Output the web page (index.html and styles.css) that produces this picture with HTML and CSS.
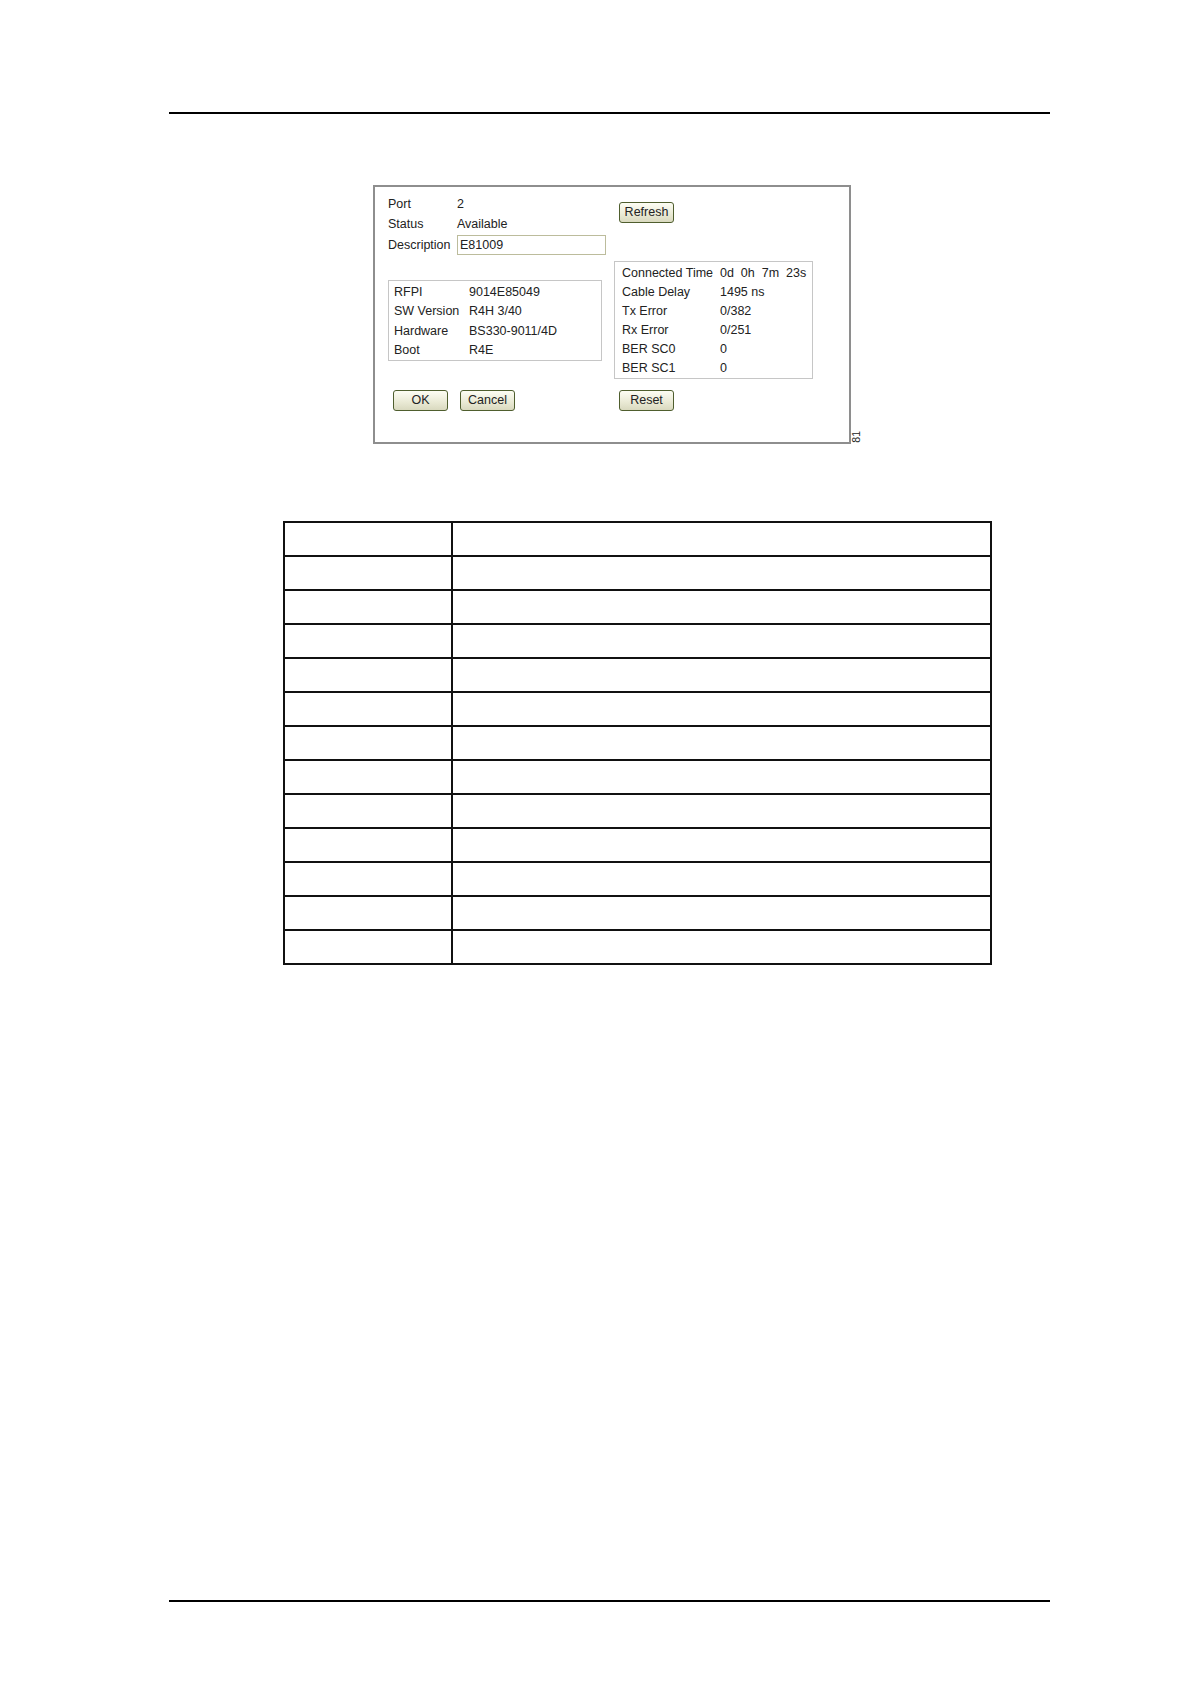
FILE: index.html
```html
<!DOCTYPE html>
<html>
<head>
<meta charset="utf-8">
<link rel="stylesheet" href="styles.css">
</head>
<body>
<div class="page">
  <div class="rule"></div>

  <div class="figure">
    <div class="dialog">
      <div class="col-left">
        <div class="field"><span class="flabel">Port</span><span>2</span></div>
        <div class="field"><span class="flabel">Status</span><span>Available</span></div>
        <div class="field desc"><span class="flabel">Description</span><span class="input">E81009</span></div>
        <div class="infobox left-box">
          <div class="irow"><span class="ilabel">RFPI</span><span>9014E85049</span></div>
          <div class="irow"><span class="ilabel">SW Version</span><span>R4H 3/40</span></div>
          <div class="irow"><span class="ilabel">Hardware</span><span>BS330-9011/4D</span></div>
          <div class="irow"><span class="ilabel">Boot</span><span>R4E</span></div>
        </div>
        <div class="btnrow">
          <span class="btn">OK</span>
          <span class="btn">Cancel</span>
        </div>
      </div>
      <div class="col-right">
        <span class="btn refresh">Refresh</span>
        <div class="infobox right-box">
          <div class="irow"><span class="rlabel">Connected Time</span><span class="pre">0d  0h  7m  23s</span></div>
          <div class="irow"><span class="rlabel">Cable Delay</span><span>1495 ns</span></div>
          <div class="irow"><span class="rlabel">Tx Error</span><span>0/382</span></div>
          <div class="irow"><span class="rlabel">Rx Error</span><span>0/251</span></div>
          <div class="irow"><span class="rlabel">BER SC0</span><span>0</span></div>
          <div class="irow"><span class="rlabel">BER SC1</span><span>0</span></div>
        </div>
        <span class="btn reset">Reset</span>
      </div>
      <span class="fignum">81</span>
    </div>
  </div>

  <table class="grid">
    <tr><td class="c1"></td><td></td></tr>
    <tr><td class="c1"></td><td></td></tr>
    <tr><td class="c1"></td><td></td></tr>
    <tr><td class="c1"></td><td></td></tr>
    <tr><td class="c1"></td><td></td></tr>
    <tr><td class="c1"></td><td></td></tr>
    <tr><td class="c1"></td><td></td></tr>
    <tr><td class="c1"></td><td></td></tr>
    <tr><td class="c1"></td><td></td></tr>
    <tr><td class="c1"></td><td></td></tr>
    <tr><td class="c1"></td><td></td></tr>
    <tr><td class="c1"></td><td></td></tr>
    <tr><td class="c1"></td><td></td></tr>
  </table>

  <div class="rule bottom"></div>
</div>
</body>
</html>
```

FILE: styles.css
```css
html, body {
  margin: 0;
  padding: 0;
  background: #ffffff;
}

body {
  font-family: "Liberation Sans", Arial, sans-serif;
  color: #222222;
}

.page {
  width: 881px;
  margin-left: 169px;
  padding-top: 112px;
}

.rule {
  height: 0;
  border-top: 2px solid #000;
}

.rule.bottom {
  margin-top: 635px;
}

.figure {
  margin-top: 71px;
  padding-left: 204px;
}

.dialog {
  position: relative;
  box-sizing: border-box;
  width: 478px;
  height: 259px;
  border: 2px solid #8e8e8e;
  padding: 8px 0 0 13px;
  display: flex;
  font-size: 12.5px;
}

.col-left {
  width: 226px;
  display: flex;
  flex-direction: column;
}

.field {
  display: flex;
  height: 19.5px;
  line-height: 19.5px;
}

.flabel {
  width: 69px;
}

.field.desc {
  margin-top: 1px;
  height: 20px;
  line-height: 20px;
}

.input {
  box-sizing: border-box;
  width: 149px;
  height: 20px;
  line-height: 18px;
  border: 1px solid #bcbc9c;
  padding-left: 2px;
  background: #fff;
}

.infobox {
  border: 1px solid #c6c6c6;
}

.left-box {
  box-sizing: border-box;
  width: 214px;
  height: 81px;
  margin-top: 25px;
  padding: 2px 0 0 5px;
}

.irow {
  display: flex;
  height: 19.3px;
  line-height: 19.3px;
}

.ilabel {
  width: 75px;
}

.btnrow {
  display: flex;
  gap: 12px;
  margin-top: 29px;
  padding-left: 5px;
}

.btn {
  box-sizing: border-box;
  display: inline-block;
  width: 55px;
  height: 21px;
  line-height: 19px;
  text-align: center;
  border: 1px solid #4f5e2e;
  border-radius: 3px;
  background: linear-gradient(#fdfdf4, #e9e9d4 60%, #d9d9bf);
  color: #222222;
}

.col-right {
  display: flex;
  flex-direction: column;
  align-items: flex-start;
}

.refresh {
  margin-top: 7px;
  margin-left: 5px;
}

.right-box {
  box-sizing: border-box;
  width: 199px;
  height: 118px;
  margin-top: 38px;
  padding: 2px 0 0 7px;
}

.right-box .irow {
  height: 19px;
  line-height: 19px;
}

.rlabel {
  width: 98px;
}

.pre {
  white-space: pre;
}

.reset {
  margin-top: 11px;
  margin-left: 5px;
}

.fignum {
  position: absolute;
  right: -13px;
  bottom: -1px;
  writing-mode: vertical-rl;
  transform: rotate(180deg);
  font-size: 10.5px;
  line-height: 11px;
  color: #222;
}

.grid {
  margin-top: 77px;
  margin-left: 114px;
  margin-bottom: 0;
  width: 709px;
  border-collapse: collapse;
  table-layout: fixed;
}

.grid tr {
  height: 34px;
}

.grid td {
  border: 2px solid #111;
  padding: 0;
}

.grid td.c1 {
  width: 166px;
}
```
